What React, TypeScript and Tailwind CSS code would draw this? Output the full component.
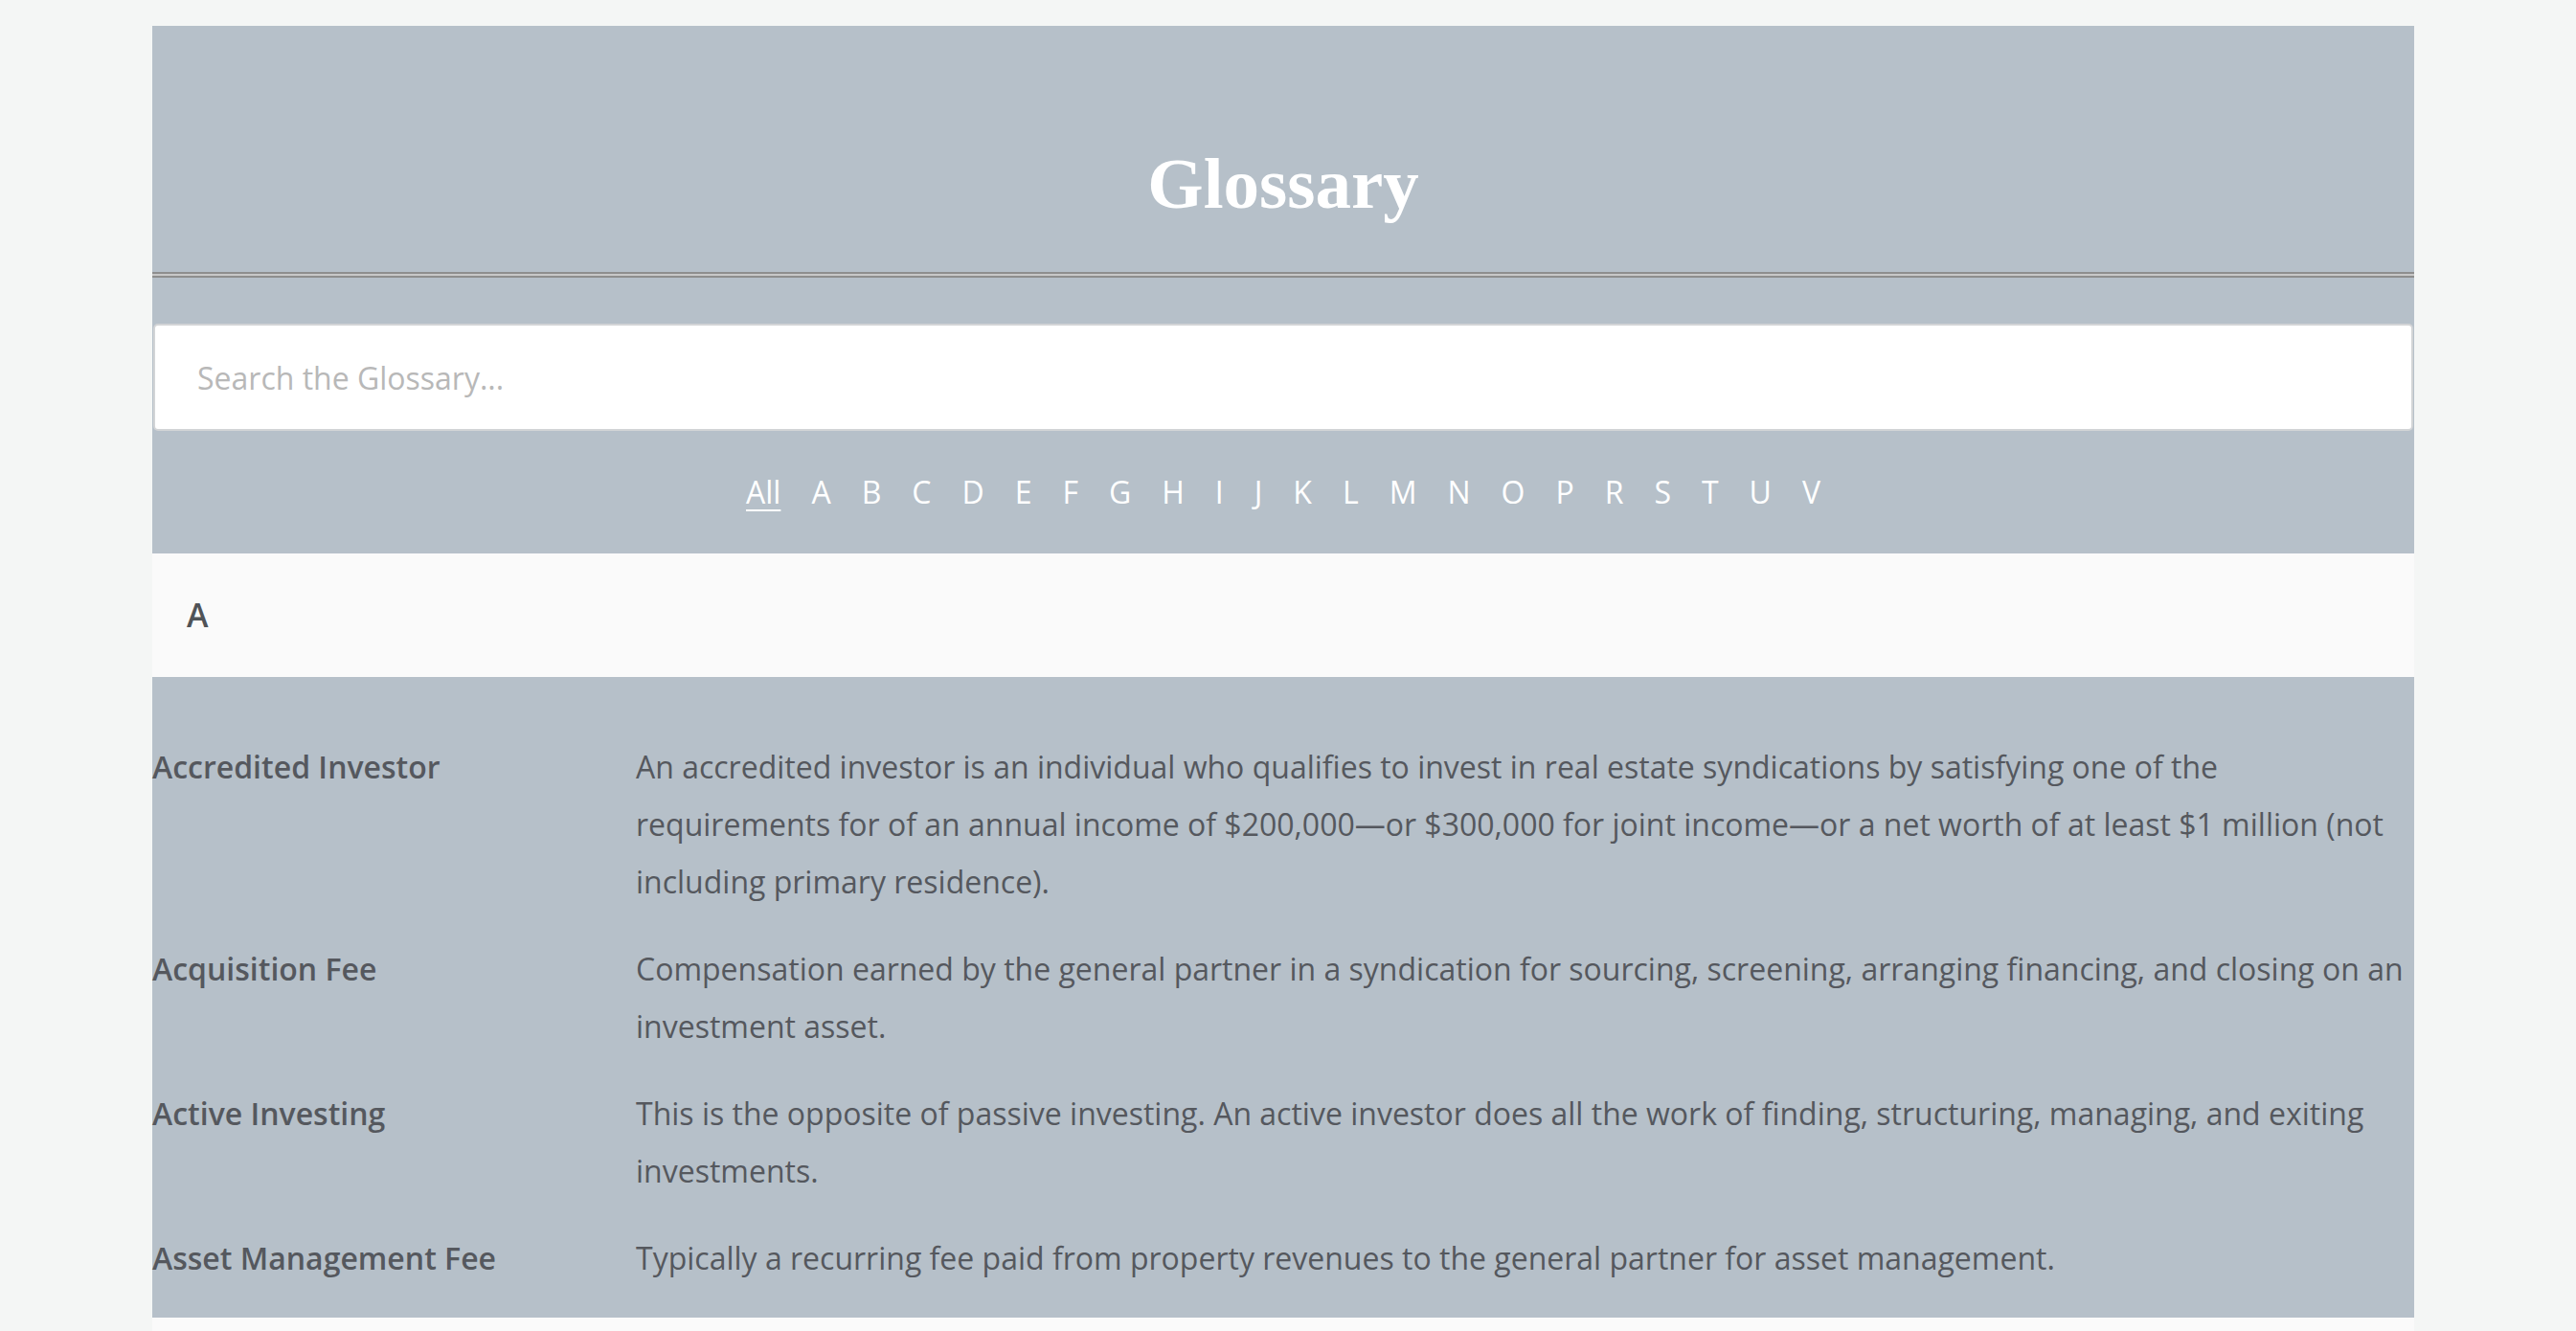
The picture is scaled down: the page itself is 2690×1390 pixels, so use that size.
import React from "react";

const letters = ["A", "B", "C", "D", "E", "F", "G", "H", "I", "J", "K", "L", "M", "N", "O", "P", "R", "S", "T", "U", "V"];

const terms = [
  {
    term: "Accredited Investor",
    def: "An accredited investor is an individual who qualifies to invest in real estate syndications by satisfying one of the requirements for of an annual income of $200,000—or $300,000 for joint income—or a net worth of at least $1 million (not including primary residence).",
  },
  {
    term: "Acquisition Fee",
    def: "Compensation earned by the general partner in a syndication for sourcing, screening, arranging financing, and closing on an investment asset.",
  },
  {
    term: "Active Investing",
    def: "This is the opposite of passive investing. An active investor does all the work of finding, structuring, managing, and exiting investments.",
  },
  {
    term: "Asset Management Fee",
    def: "Typically a recurring fee paid from property revenues to the general partner for asset management.",
  },
];

function TermRow({ term, def }: { term: string; def: string }) {
  return (
    <div className="grid grid-cols-[505px_1fr] pb-[31px] last:pb-0">
      <div className="text-[32px] leading-[60px] font-semibold text-[#55585e]">{term}</div>
      <div className="text-[32px] leading-[60px] text-[#55585e] pr-[8px]">{def}</div>
    </div>
  );
}

export default function App() {
  return (
    <div
      className="min-h-screen bg-[#f4f6f5] pt-[27px]"
      style={{ fontFamily: '"Open Sans", "Liberation Sans", sans-serif' }}
    >
      <div className="ml-[159px] w-[2362px] bg-[#b6c0c9]">
        <header className="h-[257px] pt-[129px] text-center">
          <h1
            className="text-[75px] leading-[72px] font-bold text-white"
            style={{ fontFamily: '"Liberation Serif", "DejaVu Serif", serif' }}
          >
            Glossary
          </h1>
        </header>
        <div className="h-[6px] border-y-2 border-[#8e8e8e] bg-[#c8c8c8]" />

        <div className="pt-[48px] px-[1px]">
          <input
            type="text"
            placeholder="Search the Glossary..."
            className="w-full h-[112px] bg-white border-2 border-[#d2d4d6] rounded-[5px] px-[44px] text-[32px] text-[#555] placeholder:text-[#b8b8b8] outline-none"
          />
        </div>

        <nav className="flex justify-center gap-[32px] py-[40px] text-[32px] leading-[48px] text-white">
          <a className="underline decoration-2 underline-offset-[6px]">All</a>
          {letters.map((l) => (
            <a key={l}>{l}</a>
          ))}
        </nav>

        <div className="h-[129px] bg-[#fafafa] flex items-center pl-[36px]">
          <h2 className="text-[34px] font-semibold text-[#505357]">A</h2>
        </div>

        <div className="pt-[64px] pb-[32px]">
          {terms.map((t) => (
            <TermRow key={t.term} term={t.term} def={t.def} />
          ))}
        </div>

        {/* next letter band, starts just above the fold */}
        <div className="h-[129px] bg-[#fafafa]" />
      </div>
    </div>
  );
}
